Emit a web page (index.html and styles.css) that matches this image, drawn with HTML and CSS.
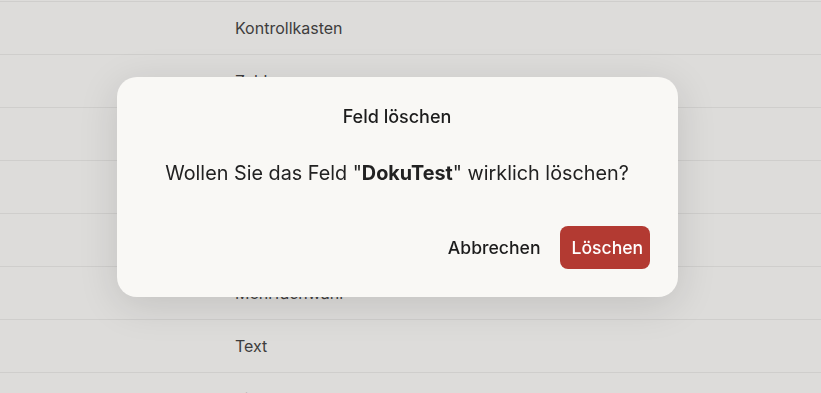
FILE: index.html
```html
<!DOCTYPE html>
<html lang="de">

<head>
    <meta charset="UTF-8">
    <meta name="viewport" content="width=device-width, initial-scale=1.0">
    <title>Feld löschen</title>
    <link rel="stylesheet" href="styles.css">
</head>

<body>
    <ul class="field-list">
        <li class="field-row">Kontrollkasten</li>
        <li class="field-row">Zahl</li>
        <li class="field-row">Datum</li>
        <li class="field-row">Auswahl</li>
        <li class="field-row">Mehrfachwahl</li>
        <li class="field-row">Mehrfachwahl</li>
        <li class="field-row">Text</li>
        <li class="field-row">Einzelauswahl</li>
    </ul>

    <div class="overlay">
        <div class="dialog">
            <h2 class="dialog-title">Feld löschen</h2>
            <p class="dialog-message">Wollen Sie das Feld "<strong>DokuTest</strong>" wirklich löschen?</p>
            <div class="dialog-actions">
                <button class="btn btn-cancel">Abbrechen</button>
                <button class="btn btn-danger">Löschen</button>
            </div>
        </div>
    </div>
</body>

</html>
```

FILE: styles.css
```css
* {
    margin: 0;
    padding: 0;
    box-sizing: border-box;
}

body {
    font-family: Inter, "Noto Sans", sans-serif;
    background-color: #dddcda;
    color: #1f1f1f;
    height: 393px;
    overflow: hidden;
}

.field-list {
    list-style: none;
    padding-top: 1px;
}

.field-row {
    height: 53px;
    border-top: 1px solid #cfcecc;
    padding-left: 235px;
    display: flex;
    align-items: center;
    font-size: 16px;
    font-weight: 400;
    color: #3d3d3d;
}

/* dialog sits a bit up and left of the true centre */
.overlay {
    position: fixed;
    inset: 0;
    display: flex;
    align-items: center;
    justify-content: center;
    padding: 0 27px 19px 0;
}

.dialog {
    width: 561px;
    height: 220px;
    flex-shrink: 0;
    background-color: #f9f8f5;
    border-radius: 20px;
    padding: 28px;
    box-shadow: 0 8px 40px rgba(0, 0, 0, 0.12);
    display: flex;
    flex-direction: column;
}

.dialog-title {
    font-size: 18px;
    font-weight: 500;
    line-height: 24px;
    text-align: center;
    color: #1c1c1c;
}

.dialog-message {
    margin-top: 30px;
    font-size: 19.8px;
    line-height: 28px;
    text-align: center;
    color: #222;
}

.dialog-message strong {
    font-weight: 700;
}

.dialog-actions {
    margin-top: auto;
    display: flex;
    justify-content: flex-end;
    align-items: center;
    gap: 7px;
}

.btn {
    font-family: inherit;
    font-size: 17.6px;
    font-weight: 500;
    height: 43px;
    padding: 0 12px;
    border: none;
    border-radius: 8px;
    cursor: pointer;
}

.btn-cancel {
    background: none;
    color: #1c1c1c;
}

.btn-danger {
    background-color: #b33a32;
    color: #fff;
    width: 90px;
}
```
